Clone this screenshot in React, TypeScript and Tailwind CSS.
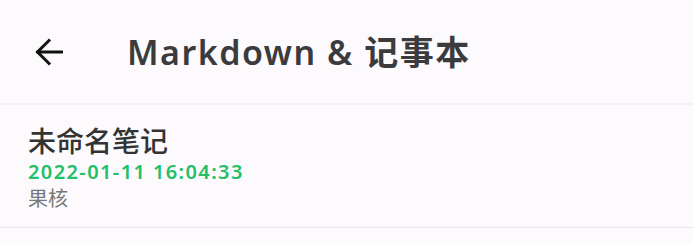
export default function App() {
  return (
    <div
      className="h-[243px] w-[693px] overflow-hidden bg-[#fcfafd]"
      style={{ fontFamily: '"Noto Sans", "Noto Sans CJK SC", sans-serif' }}
    >
      <header className="flex h-[105px] items-center border-b-2 border-[#f3f1f4] pl-[35px]">
        <svg width="28" height="28" viewBox="0 0 28 28" fill="none" stroke="#111" strokeWidth="3" strokeLinecap="square">
          <path d="M27 14H3" />
          <path d="M14 2.5L2.5 14L14 25.5" />
        </svg>
        <h1 className="ml-[64px] text-[34px] font-semibold leading-none tracking-[1.5px] text-[#3b3b3d]">Markdown &amp; 记事本</h1>
      </header>
      <div className="border-b border-[#e7e5e9] pl-[28px] pt-[19px] pb-[15px]">
        <div className="text-[28px] font-medium leading-[34px] text-[#333]">未命名笔记</div>
        <div className="mt-[1px] text-[20px] font-semibold leading-[25px] tracking-[1.4px] text-[#22c067]">2022-01-11 16:04:33</div>
        <div className="mt-[2px] text-[20px] leading-[26px] text-[#777]">果核</div>
      </div>
    </div>
  );
}
